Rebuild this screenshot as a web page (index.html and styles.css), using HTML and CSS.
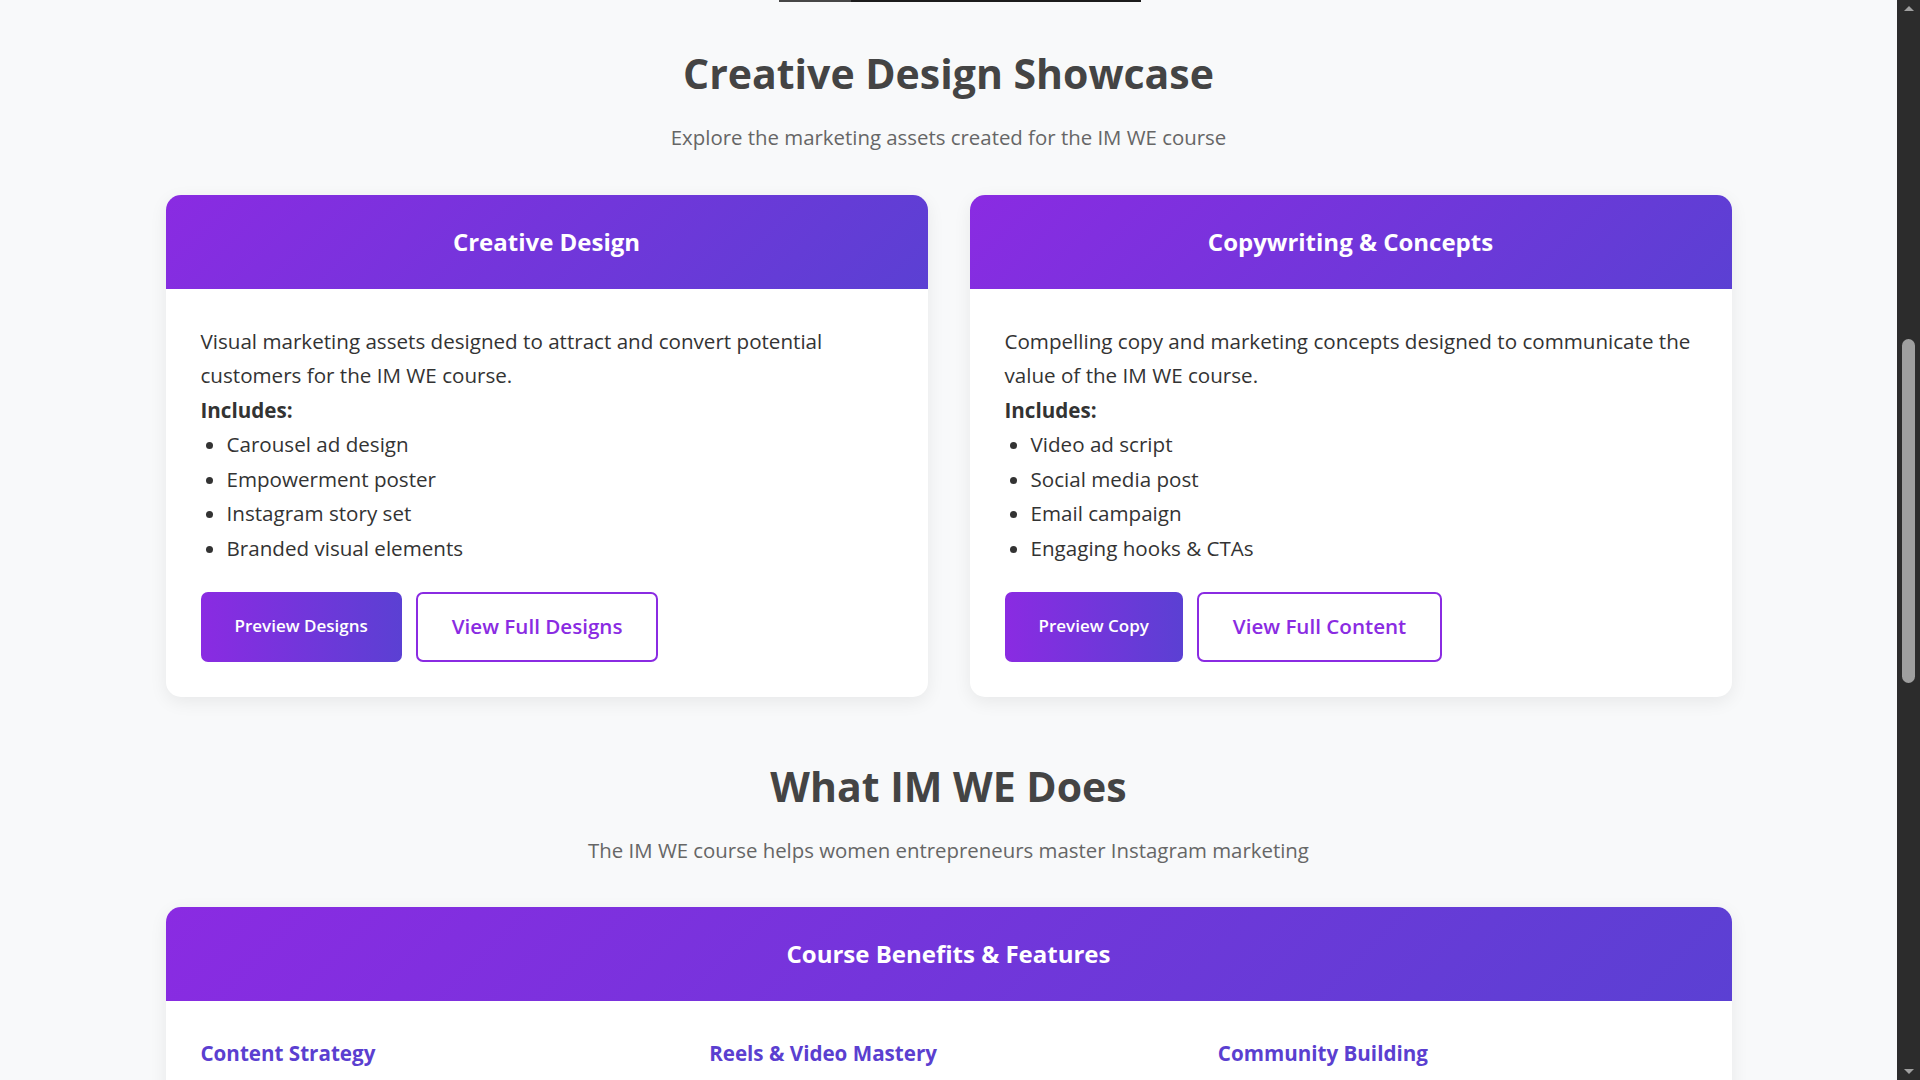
FILE: index.html
```html
<!DOCTYPE html>
<html lang="en">
<head>
<meta charset="utf-8">
<title>IM WE – Creative Design Showcase</title>
<link rel="stylesheet" href="styles.css">
</head>
<body>
<div class="page">
  <div class="topbar"><span class="topbar-done"></span><span class="topbar-rest"></span></div>

  <section class="section">
    <div class="container">
      <h2 class="section-title">Creative Design Showcase</h2>
      <p class="section-subtitle">Explore the marketing assets created for the IM WE course</p>

      <div class="showcase-grid">
        <article class="card">
          <header class="card-header"><h3>Creative Design</h3></header>
          <div class="card-body">
            <p>Visual marketing assets designed to attract and convert potential customers for the IM WE course.</p>
            <p class="includes">Includes:</p>
            <ul class="card-list">
              <li>Carousel ad design</li>
              <li>Empowerment poster</li>
              <li>Instagram story set</li>
              <li>Branded visual elements</li>
            </ul>
            <div class="card-actions">
              <a class="btn btn-primary" href="#">Preview Designs</a>
              <a class="btn btn-outline" href="#">View Full Designs</a>
            </div>
          </div>
        </article>

        <article class="card">
          <header class="card-header"><h3>Copywriting &amp; Concepts</h3></header>
          <div class="card-body">
            <p>Compelling copy and marketing concepts designed to communicate the value of the IM WE course.</p>
            <p class="includes">Includes:</p>
            <ul class="card-list">
              <li>Video ad script</li>
              <li>Social media post</li>
              <li>Email campaign</li>
              <li>Engaging hooks &amp; CTAs</li>
            </ul>
            <div class="card-actions">
              <a class="btn btn-primary" href="#">Preview Copy</a>
              <a class="btn btn-outline" href="#">View Full Content</a>
            </div>
          </div>
        </article>
      </div>
    </div>
  </section>

  <section class="section">
    <div class="container">
      <h2 class="section-title">What IM WE Does</h2>
      <p class="section-subtitle">The IM WE course helps women entrepreneurs master Instagram marketing</p>

      <article class="card">
        <header class="card-header"><h3>Course Benefits &amp; Features</h3></header>
        <div class="card-body">
          <div class="benefits-grid">
            <div class="benefit"><h4>Content Strategy</h4></div>
            <div class="benefit"><h4>Reels &amp; Video Mastery</h4></div>
            <div class="benefit"><h4>Community Building</h4></div>
          </div>
        </div>
      </article>
    </div>
  </section>
</div>

<div class="scrollbar" aria-hidden="true">
  <span class="sb-arrow sb-up"></span>
  <span class="sb-track"><span class="sb-thumb"></span></span>
  <span class="sb-arrow sb-down"></span>
</div>
</body>
</html>
```

FILE: styles.css
```css
html, body {
  margin: 0;
  height: 100%;
  overflow: hidden;
}

body {
  display: flex;
  background: #f8f9fa;
  color: #333;
  font-family: "Open Sans", "Noto Sans", "Liberation Sans", sans-serif;
}

.page {
  flex: 1;
  min-width: 0;
  overflow: hidden;
}

/* thin progress strip left from the block above */
.topbar {
  display: flex;
  width: 362px;
  height: 2px;
  margin-left: 779px;
}
.topbar-done { width: 72px; background: #474747; }
.topbar-rest { flex: 1; background: #1c1c1c; }

.section {
  padding: 46px 0 18px;
}

.container {
  width: 1566px;
  margin: 0 auto;
}

.section-title {
  margin: 0;
  font-size: 41px;
  line-height: 50px;
  font-weight: 700;
  color: #444;
  text-align: center;
}

.section-subtitle {
  margin: 22px 0 40px;
  font-size: 20.4px;
  line-height: 34.56px;
  color: #666;
  text-align: center;
}

.showcase-grid {
  display: grid;
  grid-template-columns: 1fr 1fr;
  gap: 42px;
}

.card {
  background: #fff;
  border-radius: 15px;
  overflow: hidden;
  box-shadow: 0 5px 18px rgba(0, 0, 0, 0.07);
}

.card-header {
  padding: 31px 35px;
  background: linear-gradient(135deg, #8a2be2 0%, #5b40d3 100%);
  color: #fff;
  text-align: center;
}
.card-header h3 {
  margin: 0;
  font-size: 24px;
  line-height: 32px;
  font-weight: 700;
}

.card-body {
  padding: 35px;
  font-size: 20.6px;
  line-height: 34.56px;
}

.card-body p {
  margin: 0;
}

.includes {
  font-weight: 700;
}

.card-list {
  margin: 0;
  padding-left: 26px;
}

.card-actions {
  display: flex;
  gap: 14px;
  margin-top: 26px;
}

.btn {
  display: flex;
  align-items: center;
  box-sizing: border-box;
  height: 70px;
  padding: 0 34px;
  border-radius: 7px;
  text-decoration: none;
  font-weight: 600;
}

.btn-primary {
  background: linear-gradient(90deg, #8a2be2 0%, #5b40d3 100%);
  color: #fff;
  font-size: 17px;
}

.btn-outline {
  border: 2px solid #8a2be2;
  background: #fff;
  color: #8a2be2;
  font-size: 20.6px;
}

.benefits-grid {
  display: grid;
  grid-template-columns: repeat(3, 1fr);
  gap: 30px;
}

.benefit h4 {
  margin: 0;
  font-size: 20.6px;
  line-height: 34.56px;
  font-weight: 700;
  color: #5b3fd0;
}

/* fake window scrollbar */
.scrollbar {
  width: 23px;
  flex: none;
  display: flex;
  flex-direction: column;
  align-items: center;
  background: #2c2c2c;
}
.sb-arrow {
  width: 0;
  height: 0;
  border-left: 5px solid transparent;
  border-right: 5px solid transparent;
}
.sb-up {
  margin-top: 6px;
  border-bottom: 5px solid #a0a0a0;
}
.sb-down {
  margin-bottom: 6px;
  border-top: 5px solid #a0a0a0;
}
.sb-track {
  flex: 1;
  width: 100%;
  display: flex;
  justify-content: center;
}
.sb-thumb {
  width: 13px;
  height: 344px;
  margin-top: 328px;
  border-radius: 7px;
  background: #9f9f9f;
}
```
